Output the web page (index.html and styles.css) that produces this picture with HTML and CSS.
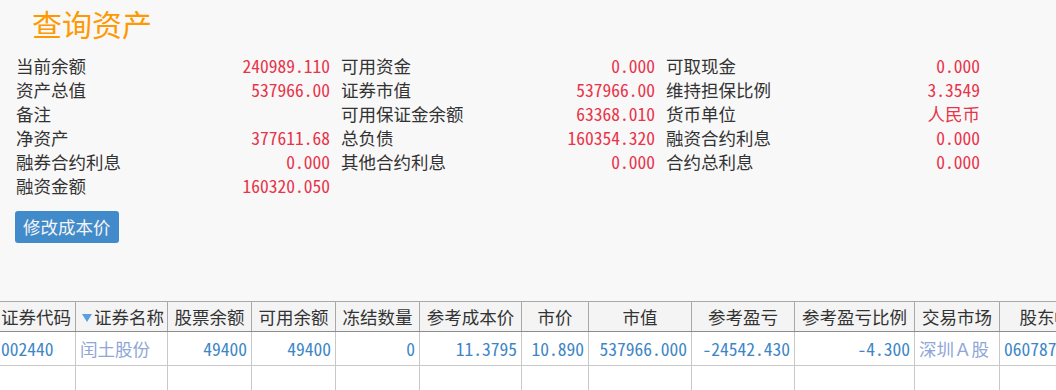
FILE: index.html
```html
<!DOCTYPE html>
<html lang="zh-CN">
<head>
    <meta charset="UTF-8">
    <title>查询资产</title>
    <link rel="stylesheet" href="styles.css">
</head>
<body>

    <h1 class="titulo">查询资产</h1>

    <div class="resumo">
        <span class="rotulo">当前余额</span><span class="valor">240989.110</span>
        <span class="rotulo">可用资金</span><span class="valor">0.000</span>
        <span class="rotulo">可取现金</span><span class="valor">0.000</span>

        <span class="rotulo">资产总值</span><span class="valor">537966.00</span>
        <span class="rotulo">证券市值</span><span class="valor">537966.00</span>
        <span class="rotulo">维持担保比例</span><span class="valor">3.3549</span>

        <span class="rotulo">备注</span><span class="valor"></span>
        <span class="rotulo">可用保证金余额</span><span class="valor">63368.010</span>
        <span class="rotulo">货币单位</span><span class="valor">人民币</span>

        <span class="rotulo">净资产</span><span class="valor">377611.68</span>
        <span class="rotulo">总负债</span><span class="valor">160354.320</span>
        <span class="rotulo">融资合约利息</span><span class="valor">0.000</span>

        <span class="rotulo">融券合约利息</span><span class="valor">0.000</span>
        <span class="rotulo">其他合约利息</span><span class="valor">0.000</span>
        <span class="rotulo">合约总利息</span><span class="valor">0.000</span>

        <span class="rotulo">融资金额</span><span class="valor">160320.050</span>
    </div>

    <button class="botao">修改成本价</button>

    <div class="tabela-wrap">
        <table class="tabela">
            <colgroup>
                <col style="width:79px">
                <col style="width:92px">
                <col style="width:84px">
                <col style="width:84px">
                <col style="width:84px">
                <col style="width:102px">
                <col style="width:67px">
                <col style="width:103px">
                <col style="width:103px">
                <col style="width:120px">
                <col style="width:85px">
                <col style="width:110px">
            </colgroup>
            <thead>
                <tr>
                    <th>证券代码</th>
                    <th class="ordenado"><span class="seta"></span>证券名称</th>
                    <th>股票余额</th>
                    <th>可用余额</th>
                    <th>冻结数量</th>
                    <th>参考成本价</th>
                    <th>市价</th>
                    <th>市值</th>
                    <th>参考盈亏</th>
                    <th>参考盈亏比例</th>
                    <th>交易市场</th>
                    <th>股东帐号</th>
                </tr>
            </thead>
            <tbody>
                <tr>
                    <td>002440</td>
                    <td class="claro">闰土股份</td>
                    <td class="num">49400</td>
                    <td class="num">49400</td>
                    <td class="num">0</td>
                    <td class="num">11.3795</td>
                    <td class="num">10.890</td>
                    <td class="num">537966.000</td>
                    <td class="num">-24542.430</td>
                    <td class="num">-4.300</td>
                    <td class="claro largo">深圳Ａ股</td>
                    <td>0607871</td>
                </tr>
                <tr class="vazia">
                    <td></td><td></td><td></td><td></td><td></td><td></td>
                    <td></td><td></td><td></td><td></td><td></td><td></td>
                </tr>
            </tbody>
        </table>
    </div>

</body>
</html>
```

FILE: styles.css
```css
html, body {
    overflow: hidden;
}
body {
    margin: 0;
    background: #f8f8f8;
    font-family: "Noto Sans CJK SC", "DejaVu Sans", sans-serif;
    font-feature-settings: "hwid";
    font-size: 17.5px;
    color: #333;
}
.titulo {
    margin: 0;
    padding-left: 32px;
    font-size: 30px;
    font-weight: normal;
    line-height: 46px;
    color: #ff9900;
}
.resumo {
    display: grid;
    grid-template-columns: 150px 164px 161px 164px 161px 164px;
    margin: 8px 0 0 16px;
    line-height: 24px;
}
.resumo .rotulo:nth-child(6n+3),
.resumo .rotulo:nth-child(6n+5) {
    margin-left: 11px;
}
.valor {
    text-align: right;
    color: #e8344a;
}
.botao {
    display: block;
    margin: 13px 0 0 15px;
    height: 32px;
    padding: 0 8px;
    border: none;
    border-radius: 3px;
    background: #428bca;
    color: #f4f4f4;
    font-family: inherit;
    font-feature-settings: "hwid";
    font-size: 17.5px;
    line-height: 32px;
}
.tabela-wrap {
    margin: 58px 0 0 -4px;
}
.tabela {
    table-layout: fixed;
    border-collapse: collapse;
    width: 1113px;
    background: #fff;
}
.tabela th {
    height: 29px;
    padding: 0 4px;
    background: #f4f4f4;
    border: 1px solid #a8a8a8;
    border-bottom-color: #8c8c8c;
    font-weight: normal;
    color: #333;
    white-space: nowrap;
    overflow: hidden;
    text-align: center;
    line-height: 29px;
}
.tabela th.ordenado {
    text-align: left;
}
.seta {
    display: inline-block;
    width: 0;
    height: 0;
    margin: 0 2px 3px 2px;
    border-left: 5px solid transparent;
    border-right: 5px solid transparent;
    border-top: 8px solid #5b9fe0;
    vertical-align: middle;
}
.tabela td {
    height: 33px;
    padding: 0 4px;
    border: 1px solid #c8c8c8;
    border-top: none;
    color: #3d86c6;
    white-space: nowrap;
    overflow: hidden;
    line-height: 33px;
}
.tabela td.num {
    text-align: right;
}
.tabela td.claro {
    color: #8fa6d6;
}
.tabela td.largo {
    font-feature-settings: normal;
}
.tabela tr.vazia td {
    height: 40px;
}
```
